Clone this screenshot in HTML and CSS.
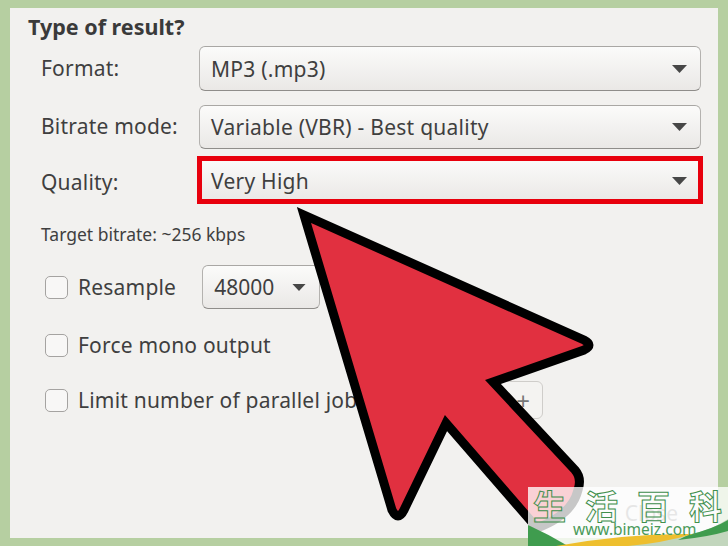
FILE: index.html
```html
<!DOCTYPE html>
<html lang="en">
<head>
    <meta charset="UTF-8">
    <meta name="viewport" content="width=device-width, initial-scale=1.0">
    <title>Type of result?</title>
    <link rel="stylesheet" href="styles.css">
</head>
<body>
    <div class="panel">
        <h1 class="panel-title">Type of result?</h1>
        <div class="form-grid">
            <div class="form-label">Format:</div>
            <div class="combo combo-first">
                <span>MP3 (.mp3)</span>
                <svg class="caret" width="15" height="8" viewBox="0 0 15 8"><path d="M0 0H15L7.5 8Z"/></svg>
            </div>
            <div class="form-label">Bitrate mode:</div>
            <div class="combo">
                <span>Variable (VBR) - Best quality</span>
                <svg class="caret" width="15" height="8" viewBox="0 0 15 8"><path d="M0 0H15L7.5 8Z"/></svg>
            </div>
            <div class="form-label">Quality:</div>
            <div class="combo combo-marked">
                <span>Very High</span>
                <svg class="caret" width="15" height="8" viewBox="0 0 15 8"><path d="M0 0H15L7.5 8Z"/></svg>
            </div>
        </div>
        <div class="target-note">Target bitrate: ~256 kbps</div>
        <div class="option-row option-resample">
            <span class="check"></span>
            <span class="option-label">Resample</span>
            <div class="combo combo-small">
                <span>48000</span>
                <svg class="caret" width="14" height="7" viewBox="0 0 15 8"><path d="M0 0H15L7.5 8Z"/></svg>
            </div>
        </div>
        <div class="option-row option-mono">
            <span class="check"></span>
            <span class="option-label">Force mono output</span>
        </div>
        <div class="option-row option-jobs">
            <span class="check"></span>
            <span class="option-label jobs-label">Limit number of parallel jobs:</span>
            <div class="spin">
                <span class="spin-value">1</span>
                <span class="spin-btn">−</span>
                <span class="spin-btn">+</span>
            </div>
        </div>
        <div class="panel-footer">
            <span class="close-text">Close</span>
        </div>
    </div>

    <!-- big pointer over the form -->
    <svg class="pointer" width="728" height="546" viewBox="0 0 728 546">
        <path d="M304 215L584 340Q594 345 584 350L493 382L575 470Q582 478 578 490Q572 515 537 528L446 423L404 510Q398 522 392 510Z"/>
    </svg>

    <div class="watermark">
        <svg class="watermark-swoosh" width="200" height="59" viewBox="0 0 200 59">
            <path class="swoosh-green" d="M0 38Q20 47 40 59H0Z"/>
            <path class="swoosh-pale" d="M60 59Q130 56 165 47Q185 42 200 32V59Z"/>
            <path class="swoosh-green" d="M160 48Q185 42 200 33V44Q180 50 150 53Z"/>
            <path class="swoosh-yellow" d="M28 59Q100 46 165 47Q135 56 100 59Z"/>
        </svg>
        <div class="watermark-title">生活百科</div>
        <div class="watermark-url">www.bimeiz.com</div>
    </div>
</body>
</html>
```
FILE: styles.css
```css
* {
    margin: 0;
    padding: 0;
    box-sizing: border-box;
}

body {
    width: 728px;
    height: 546px;
    overflow: hidden;
    position: relative;
    background: #b6cfa1;
    font-family: "Noto Sans", Arial, sans-serif;
    color: #3f3f3f;
}

.panel {
    width: 708px;
    height: 530px;
    margin: 8px 10px;
    padding: 7px 17px 0 18px;
    background: #f2f1ef;
    display: flex;
    flex-direction: column;
}

.panel-title {
    font-size: 21.5px;
    line-height: 24px;
    font-weight: 700;
    color: #3a3a3a;
}

.form-grid {
    margin: 7px 0 0 13px;
    display: grid;
    grid-template-columns: 158px 502px;
    row-gap: 14px;
    align-items: center;
}

.form-label {
    font-size: 21px;
    letter-spacing: 0.2px;
    margin-top: -2px;
}

.combo {
    height: 44px;
    padding: 0 13px 0 11px;
    display: flex;
    align-items: center;
    justify-content: space-between;
    font-size: 21px;
    letter-spacing: 0.25px;
    background: linear-gradient(#fbfbfa, #eae8e6);
    border: 1px solid #b4b2af;
    border-top-color: #a9a7a4;
    border-bottom-color: #8f8d8a;
    border-radius: 6px;
}

.combo-first {
    height: 45px;
}

.combo-marked {
    padding-top: 2px;
    border-radius: 0;
    border-color: #e8000d;
    outline: 5px solid #e8000d;
    outline-offset: -3px;
    margin-top: -5px;
}

.caret {
    fill: #474747;
}

.target-note {
    margin: 21px 0 0 13px;
    font-size: 17.5px;
    line-height: 22px;
}

.option-row {
    margin-left: 17px;
    display: flex;
    align-items: center;
    height: 44px;
}

.option-resample {
    margin-top: 20px;
}

.option-mono {
    margin-top: 14px;
}

.option-jobs {
    margin-top: 11px;
}

.check {
    width: 23px;
    height: 23px;
    margin-right: 10px;
    flex-shrink: 0;
    background: #f8f7f6;
    border: 1px solid #a5a3a1;
    border-radius: 5px;
}

.option-label {
    font-size: 21px;
    letter-spacing: 0.2px;
}

.combo-small {
    width: 118px;
    margin-left: 26px;
    letter-spacing: 0;
}

.jobs-label {
    width: 290px;
    white-space: nowrap;
}

.spin {
    width: 175px;
    height: 38px;
    display: flex;
    align-items: center;
    background: #f4f3f1;
    border: 1px solid #cfcdca;
    border-radius: 6px;
}

.spin-value {
    flex-grow: 1;
    padding-left: 10px;
    font-size: 20px;
}

.spin-btn {
    width: 38px;
    text-align: center;
    font-size: 24px;
    color: #777;
}

.panel-footer {
    margin-top: auto;
    padding: 0 23px 11px 0;
    display: flex;
    justify-content: flex-end;
}

.close-text {
    font-size: 21px;
    color: #8f8f8f;
}

.pointer {
    position: absolute;
    left: 0;
    top: 0;
    fill: #e13040;
    stroke: #000;
    stroke-width: 9;
    stroke-linejoin: miter;
    stroke-miterlimit: 10;
}

/* site stamp in the corner */
.watermark {
    position: absolute;
    left: 528px;
    top: 487px;
    width: 200px;
    height: 59px;
    background: rgba(255, 255, 255, 0.78);
}

.watermark-title {
    position: relative;
    padding-left: 5px;
    font-family: "Noto Sans CJK SC", sans-serif;
    font-size: 33px;
    font-weight: 700;
    line-height: 36px;
    letter-spacing: 19px;
    white-space: nowrap;
    color: transparent;
    -webkit-text-stroke: 1px #3f8f4c;
}

.watermark-url {
    position: absolute;
    left: 45px;
    top: 30px;
    font-size: 15.5px;
    line-height: 24px;
    color: #4a9a5a;
}

.watermark-swoosh {
    position: absolute;
    left: 0;
    top: 0;
}

.swoosh-green {
    fill: #3f9c4e;
}

.swoosh-pale {
    fill: #c2d6bd;
}

.swoosh-yellow {
    fill: #eebf2e;
}
```
